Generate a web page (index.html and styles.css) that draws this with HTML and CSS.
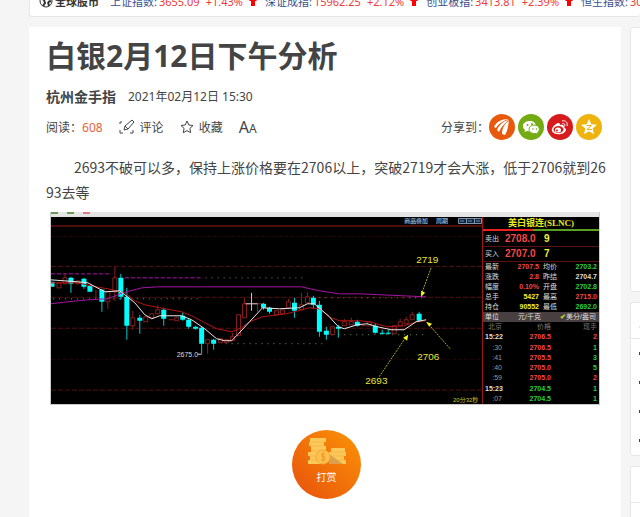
FILE: index.html
```
<!DOCTYPE html>
<html lang="zh-CN">

<head>
    <meta charset="UTF-8">
    <meta name="viewport" content="width=device-width, initial-scale=1.0">
    <title>白银2月12日下午分析</title>
    <link rel="stylesheet" href="styles.css">
</head>

<body>
    <div class="ticker">
        <strong class="ticker-title">
            <svg width="14" height="14" viewBox="0 0 14 14" fill="none" stroke="#333">
                <circle cx="7" cy="7" r="6" />
                <path d="M2 4l3 2 1 3-2 3M8 1l-1 3 3 1 2-2M9 8l3-1M9 8l1 4" stroke-width="2" />
            </svg>
            全球股市
        </strong>
        <a class="quote" href="#">上证指数: <span>3655.09</span><span>+1.43%</span>
            <svg width="8" height="10" viewBox="0 0 8 10"><path d="M4 0l4 5H6v5H2V5H0z" /></svg></a>
        <a class="quote" href="#">深证成指: <span>15962.25</span><span>+2.12%</span>
            <svg width="8" height="10" viewBox="0 0 8 10"><path d="M4 0l4 5H6v5H2V5H0z" /></svg></a>
        <a class="quote" href="#">创业板指: <span>3413.81</span><span>+2.39%</span>
            <svg width="8" height="10" viewBox="0 0 8 10"><path d="M4 0l4 5H6v5H2V5H0z" /></svg></a>
        <a class="quote" href="#">恒生指数: <span>30173.57</span></a>
    </div>

    <div class="layout">
        <main class="article">
            <h1>白银2月12日下午分析</h1>
            <div class="author">
                <strong>杭州金手指</strong>
                <time>2021年02月12日 15:30</time>
            </div>
            <div class="toolbar">
                <span class="reads">阅读：<em>608</em></span>
                <a class="tool" href="#">
                    <svg width="16" height="16" viewBox="0 0 16 16" fill="none" stroke="#444">
                        <path d="M1 5V3h2M1 11v3h3M11 14h3v-3M5 11l1-4 7-6 2 2-6 7zM6 7l3 3" />
                    </svg>
                    评论
                </a>
                <a class="tool" href="#">
                    <svg width="14" height="14" viewBox="0 0 14 14" fill="none" stroke="#444">
                        <path d="M7 1l1.8 4 4.2.5-3.1 2.9.8 4.3L7 10.600l-3.700 2.100.8-4.300L1 5.500l4.200-.5z" />
                    </svg>
                    收藏
                </a>
                <button class="font-size" type="button">A<small>A</small></button>
                <div class="share">
                    <span>分享到：</span>
                    <a class="share-btn orange" href="#" aria-label="金投网">
                        <svg viewBox="0 0 26 26" fill="#fff">
                            <path d="M5 13c2-5 7-8 15-8-6 2-10 4-13 9zM8 16c2-5 6-9 12-10-5 4-8 7-10 12zM13 20c0-5 2-10 7-13-1 5-1 9-4 14z" />
                        </svg>
                    </a>
                    <a class="share-btn green" href="#" aria-label="微信">
                        <svg viewBox="0 0 26 26">
                            <path d="M12 7c-4 0-7 2-7 5 0 2 1 3 2 4l-.5 2 2.500-1c5 1 9-1 9-5 0-3-3-5-6-5z" fill="#fff" />
                            <path d="M16 11c-3 0-5 2-5 4.500s3 4.500 7 4l2 1-.4-2c3-2 2.400-7.500-3.600-7.500z" fill="#fff" stroke="#74ab13" />
                            <g fill="#74ab13">
                                <circle cx="9.500" cy="11" r="1" />
                                <circle cx="14" cy="10" r="1" />
                                <circle cx="15" cy="15" r=".8" />
                                <circle cx="18.500" cy="15" r=".8" />
                            </g>
                        </svg>
                    </a>
                    <a class="share-btn red" href="#" aria-label="微博">
                        <svg viewBox="0 0 26 26">
                            <path d="M11 9c-3 1-7 5-6 8 2 5 13 4 14-1 0-2-2-2-2-3 0-3-3-2-4-2 0-2-1-2-2-2z" fill="#fff" />
                            <ellipse cx="11.500" cy="15.500" rx="5" ry="3.500" fill="#d71a1b" />
                            <ellipse cx="11" cy="16" rx="3" ry="2.500" fill="#fff" />
                            <circle cx="10" cy="16.500" r="1" fill="#d71a1b" />
                            <path d="M15 7c4-1 6 2 5 5M15.500 9.500c2 0 3 1 2 3" fill="none" stroke="#fff" />
                        </svg>
                    </a>
                    <a class="share-btn yellow" href="#" aria-label="QQ空间">
                        <svg viewBox="0 0 26 26">
                            <path d="M13 5l2.300 5.300 5.700.5-4.300 3.800 1.300 5.700-5-3-5 3 1.300-5.700L5 10.800l5.700-.5z" fill="#fff" />
                            <path d="M10.500 11.500h5l-4.500 4h5" fill="none" stroke="#eeb30c" />
                        </svg>
                    </a>
                </div>
            </div>

            <p class="text">2693不破可以多，保持上涨价格要在2706以上，突破2719才会大涨，低于2706就到2693去等</p>

            <figure class="terminal">
                <div class="tabs"><i></i><i></i><i></i></div>
                <svg class="chart" viewBox="0 0 433 187">
                    <!-- grid -->
                    <path d="M0 9h432M432.500 0v187" stroke="#a01818" />
                    <path d="M0 19.500h432M0 142.500h432" stroke="#240606" stroke-dasharray="4 2" />
                    <path d="M0 49.500h432M0 80.500h432M0 111.500h432M0 173.500h432" stroke="#541010" stroke-dasharray="5 2" />
                    <!-- support and resistance -->
                    <path d="M0 57h60M74 61h77" stroke="#b010b0" stroke-dasharray="4 2" />
                    <path d="M155 61h97M269 81h107" stroke="#777" stroke-dasharray="1 5" />
                    <path d="M2 82h150M175 127h98M282 118h94" stroke="#6c9a5c" stroke-dasharray="1 5" />
                    <!-- rising candles -->
                    <path class="up" d="M6 66h4v5h-4zM12 61h4v6h-4zM14 56v5M25 64h4v3h-4zM45 73v10M55 75h4v10h-4zM57 85v7M62 61h4v14h-4zM64 50v11M64 75v9M80 101h4v8h-4zM82 94v7M82 109v4M93 100h4v5h-4zM99 97h4v4h-4zM105 93h4v4h-4zM107 88v5M118 103h5M124 101h4v3h-4zM155 123h4v4h-4zM157 127v10M168 122h4v4h-4zM174 123h4v3h-4zM180 120h4v4h-4zM182 116v4M186 98h4v21h-4zM192 87h4v14h-4zM194 81v6M207 87v8M196 87h16M224 94h4v4h-4zM230 93h4v4h-4zM236 85h4v6h-4zM238 82v3M249 88h4v5h-4zM251 76v12M255 80h4v6h-4zM257 75v5M280 110h4v8h-4zM292 105h4v4h-4zM294 102v3M299 105h4v3h-4zM301 101v4M311 109h5M317 105h4v4h-4zM342 109h4v8h-4zM348 105h4v4h-4zM350 102v3M354 103h4v4h-4zM356 100v3M360 98h4v5h-4zM362 95v3" />
                    <!-- falling candles -->
                    <path class="wick" d="M20 60v16M33 61v11M51 72v23M70 57v26M76 71v52M89 98v19M113 91v18M132 96v8M138 102v10M145 109v4M151 110v27M163 122v11M213 86v7M219 90v7M244 81v20M263 79v13M269 84v36M276 110v13M288 108v13M307 103v7M325 107v10M332 113v5M338 113v5M369 95v10" />
                    <path class="down" d="M1 65v5M20 61v6M33 62v8M39 69v6M51 73v12M70 61v19M76 80v29M89 101v3M113 93v9M132 99v4M138 103v7M145 110v2M151 111v16M163 123v4M213 87v4M219 91v4M244 86v8M263 81v7M269 88v27M276 114v4M288 110v2M307 105v4M325 109v7M332 116v1M338 116v1M369 97v7" />
                    <path d="M201 76v18M195 87h12" stroke="#ccc" />
                    <!-- moving averages -->
                    <polyline class="line" stroke="#a414a4" points="0,87 17,85 37,83 57,82 72,76 91,71 107,70 154,70 251,70 269,74 289,77 309,77 376,80" />
                    <polyline class="line" stroke="#b81414" points="0,66 27,66 45,70 57,72 74,76 84,84 94,88 109,91 131,95 141,99 154,106 166,112 181,115 191,111 199,105 212,100 236,97 259,91 269,92 281,101 289,104 309,104 319,105 337,110 354,109 366,105 376,104" />
                    <polyline class="line" stroke="#f0e8e8" points="0,63 27,65 37,66 54,75 69,74 74,78 84,86 94,98 101,102 109,99 131,99 141,103 154,112 166,122 174,124 181,124 187,118 199,105 212,91 229,92 249,91 257,87 264,87 279,100 288,110 294,112 307,108 317,107 327,110 341,113 354,113 366,105 376,103" />
                    <!-- notes -->
                    <path d="M381 51l-10 27M400 132l-22-25M329 160l27-40" stroke="#a8a820" stroke-dasharray="2 1" />
                    <path d="M371 80v-6l4 2zM376 105l6 2-3 3zM358 118l-5 3 4 3z" fill="#f4f420" />
                    <g class="note">
                        <text x="366" y="46">2719</text>
                        <text x="367" y="143">2706</text>
                        <text x="315" y="167">2693</text>
                    </g>
                    <text class="low" x="126" y="140">2675.0</text>
                    <path d="M147 137.500h4" stroke="#ddd" />
                    <text class="left-time" x="403" y="185">20分32秒</text>
                    <path d="M354 1h23v6h-23zM386 1h12v6h-12z" fill="#10243c" />
                    <text class="menu" x="354" y="6">商品叠加</text>
                    <text class="menu" x="386" y="6">周期</text>
                    <path d="M408.500 1.500h23v5h-23zM416.500 1v6M424.500 1v6M410 4h4M418 4h4M426 4h4" fill="#10243c" stroke="#8098b0" />
                </svg>
                <div class="panel">
                    <div class="panel-title">美白银连(SLNC)</div>
                    <div class="ratio"></div>
                    <table class="deal">
                        <tr><th>卖出</th><td class="r">2708.0</td><td class="y">9</td></tr>
                        <tr><th>买入</th><td class="r">2707.0</td><td class="y">7</td></tr>
                    </table>
                    <table class="stats">
                        <tr><th>最新</th><td class="r">2707.5</td><th>均价</th><td class="g">2703.2</td></tr>
                        <tr><th>涨跌</th><td class="r">2.8</td><th>昨结</th><td>2704.7</td></tr>
                        <tr><th>幅度</th><td class="r">0.10%</td><th>开盘</th><td class="g">2702.8</td></tr>
                        <tr><th>总手</th><td class="y">5427</td><th>最高</th><td class="r">2715.0</td></tr>
                        <tr><th>持仓</th><td class="y">90552</td><th>最低</th><td class="g">2692.0</td></tr>
                    </table>
                    <div class="unit"><span>单位</span><span>元/千克</span><span><b>✔</b>美分/盎司</span></div>
                    <table class="ticks">
                        <tr><th>北京</th><th>价格</th><th>现手</th></tr>
                        <tr><td>15:22</td><td class="r">2706.5</td><td class="r">2</td></tr>
                        <tr><td class="sec">:30</td><td class="r">2706.5</td><td class="g">1</td></tr>
                        <tr><td class="sec">:41</td><td class="r">2705.5</td><td class="g">3</td></tr>
                        <tr><td class="sec">:40</td><td class="r">2705.0</td><td class="g">5</td></tr>
                        <tr><td class="sec">:59</td><td class="r">2705.0</td><td class="r">2</td></tr>
                        <tr><td>15:23</td><td class="g">2704.5</td><td class="g">1</td></tr>
                        <tr><td class="sec">:07</td><td class="g">2704.5</td><td class="g">1</td></tr>
                    </table>
                </div>
            </figure>

            <button class="reward" type="button">
                <svg width="40" height="30" viewBox="0 0 40 30">
                    <path d="M3 1h16v4h-2v4h2v4h-2v5h-2v9H1v-4h2v-4H1v-4h3V9H2V5h1z" fill="#fcc858" />
                    <path d="M24 11h14v4h1v4h-2v4h2v4H22V15h2z" fill="#fcc858" />
                    <path d="M4 5h13M3 9h15M4 14h13M2 19h8M3 23h7M24 15h14M24 19h13M26 23h12" stroke="#f5b54a" />
                    <path d="M22 17l14 10H22z" fill="#dca04c" />
                    <circle cx="16" cy="20" r="7" fill="#ffc14c" stroke="#f0a83c" />
                    <path d="M18 17h-3v3h3v3h-4M16 15v10" fill="none" stroke="#e9962e" />
                </svg>
                打赏
            </button>
        </main>

        <aside class="sidebar">
            <div class="side-card ad"></div>
            <div class="side-card">
                <h3>三日热门</h3>
                <ul>
                    <li></li>
                    <li></li>
                    <li></li>
                    <li></li>
                </ul>
            </div>
            <div class="side-card last">
                <h3></h3>
            </div>
        </aside>
    </div>
</body>

</html>
```
FILE: styles.css
```
* {
    box-sizing: border-box;
}

body {
    margin: 0;
    padding-left: 29px;
    background-color: #f5f5f5;
    color: #444;
    font-family: "Noto Sans", "Noto Sans CJK SC", sans-serif;
    font-size: 12px;
    overflow: hidden;
}

a {
    color: inherit;
    text-decoration: none;
}

/* index ticker */
.ticker {
    display: flex;
    align-items: center;
    gap: 8px;
    height: 32px;
    margin-top: -15px;
    padding-left: 9px;
    background-color: #fff;
    border: 1px solid #e6e6e6;
    border-right: none;
    border-radius: 3px;
    font-size: 11px;
    white-space: nowrap;
    overflow: hidden;
}

.ticker-title {
    display: flex;
    align-items: center;
    gap: 2px;
    margin-right: 3px;
    color: #333;
}

.quote {
    display: flex;
    align-items: center;
    gap: 2px;
    color: #3c4f8c;
}

.quote span {
    color: #f03a3a;
}

.quote span + span,
.quote svg {
    margin-left: 4px;
}

.quote svg {
    fill: #f00;
}

.layout {
    display: flex;
    gap: 9px;
    margin-top: 10px;
}

/* article */
.article {
    flex: 1;
    min-width: 0;
    min-height: 100vh;
    padding: 9px 14px 0 17px;
    background-color: #fff;
}

h1 {
    margin: 0;
    font-size: 30px;
    line-height: 40px;
}

.author {
    display: flex;
    align-items: center;
    gap: 12px;
    height: 40px;
}

.author strong {
    font-size: 14px;
}

.toolbar {
    display: flex;
    align-items: center;
    height: 22px;
}

.reads em {
    color: #e8643c;
    font-style: normal;
}

.tool {
    display: flex;
    align-items: center;
    gap: 5px;
    margin-left: 16px;
}

.font-size {
    margin-left: 16px;
    padding: 0;
    border: none;
    background: none;
    color: #444;
    font-family: inherit;
    font-size: 16px;
}

.font-size small {
    font-size: 12px;
}

.share {
    display: flex;
    align-items: center;
    gap: 3px;
    margin-left: auto;
    margin-right: 5px;
}

.share span {
    margin-right: -3px;
}

.share-btn {
    width: 26px;
    height: 26px;
    border-radius: 50%;
}

.share-btn svg {
    display: block;
}

.orange {
    background-color: #e8590c;
}

.green {
    background-color: #74ab13;
}

.red {
    background-color: #d71a1b;
}

.yellow {
    background-color: #eeb30c;
}

.text {
    margin: 17px 0 7px;
    font-family: "Noto Sans CJK SC", sans-serif;
    font-size: 14px;
    line-height: 25px;
    text-indent: 28px;
    word-break: break-all;
}

/* trading terminal */
.terminal {
    display: grid;
    grid-template-columns: 1fr 116px;
    margin: 0 7px 0 4px;
    border: 1px solid #ccc;
    border-top: none;
    background-color: #000;
}

.tabs {
    grid-column: 1 / 3;
    display: flex;
    gap: 9px;
    height: 5px;
    background-color: #e4e4e4;
}

.tabs i {
    width: 7px;
    height: 2px;
    background-color: #6a9a5a;
}

.tabs i:last-child {
    background-color: #d88080;
}

.chart {
    display: block;
    width: 100%;
    fill: none;
}

.up {
    stroke: #8c2020;
}

.wick {
    stroke: #0cc;
}

.down {
    stroke: #0ff;
    stroke-width: 5;
}

.chart text {
    font-family: "Liberation Sans", "Noto Sans CJK SC", sans-serif;
}

.note text {
    fill: #e4e43c;
    font-size: 10px;
}

.chart .low {
    fill: #ddd;
    font-size: 7px;
}

.chart .left-time {
    fill: #c8c820;
    font-size: 6px;
}

.chart .menu {
    fill: #a8c0dc;
    font-size: 6px;
}

.panel {
    display: flex;
    flex-direction: column;
    color: #ddd;
    font-family: "Liberation Sans", "Noto Sans CJK SC", sans-serif;
    font-size: 7px;
    line-height: 9px;
}

.panel-title {
    color: #e8e820;
    font-family: "Liberation Serif", "Noto Sans CJK SC", serif;
    font-size: 9px;
    font-weight: bold;
    line-height: 12px;
    text-align: center;
}

.ratio {
    height: 2px;
    background: linear-gradient(to right, #f02020 43%, #58a020 43%);
}

.panel table {
    width: 100%;
    border-collapse: collapse;
    table-layout: fixed;
}

.panel th,
.panel td {
    height: 10px;
    padding: 0 2px;
    text-align: right;
}

.panel th {
    font-weight: normal;
    text-align: left;
}

.panel td {
    font-weight: bold;
}

.panel .r {
    color: #f04848;
}

.panel .g {
    color: #28d040;
}

.panel .y {
    color: #f0f030;
}

.deal tr {
    border-bottom: 1px solid #581010;
}

.panel .deal th,
.panel .deal td {
    height: 15px;
    text-align: left;
}

.panel .deal td {
    font-size: 10px;
}

.deal th {
    width: 20px;
}

.deal .r {
    width: 39px;
}

.stats th {
    width: 18px;
}

.unit {
    display: flex;
    justify-content: space-between;
    height: 10px;
    padding: 0 3px 0 2px;
    background-color: #484040;
}

.unit b {
    color: #c8d820;
}

.ticks {
    flex: 1;
}

.panel .ticks th {
    color: #777;
    text-align: right;
}

.ticks th:first-child {
    width: 21px;
}

.ticks th:nth-child(2) {
    width: 49px;
}

.ticks .sec {
    color: #999;
    font-weight: normal;
}

.reward {
    display: flex;
    flex-direction: column;
    align-items: center;
    gap: 2px;
    width: 69px;
    height: 69px;
    margin: 25px auto 0;
    padding: 7px 0 0;
    border: none;
    border-radius: 50%;
    background: linear-gradient(to top right, #e8500c, #fb9406);
    color: #fff;
    font-family: inherit;
    font-size: 10px;
    cursor: pointer;
}

/* sidebar, runs off the right edge */
.sidebar {
    flex: 0 0 10px;
    min-width: 0;
}

.side-card {
    width: 300px;
    margin-bottom: 10px;
    background-color: #fff;
    border: 1px solid #e8e8e8;
    border-radius: 3px;
}

.ad {
    height: 265px;
}

.side-card h3 {
    height: 36px;
    margin: 0;
    padding-left: 8px;
    border-bottom: 1px solid #e8e8e8;
    font-size: 15px;
    line-height: 36px;
}

.side-card ul {
    margin: 0;
    padding: 0 0 0 8px;
    list-style: none;
}

.side-card li {
    display: flex;
    align-items: center;
    height: 29px;
}

.side-card li::before {
    content: "";
    width: 3px;
    height: 3px;
    background-color: #444;
}

.last {
    height: 200px;
}
```
